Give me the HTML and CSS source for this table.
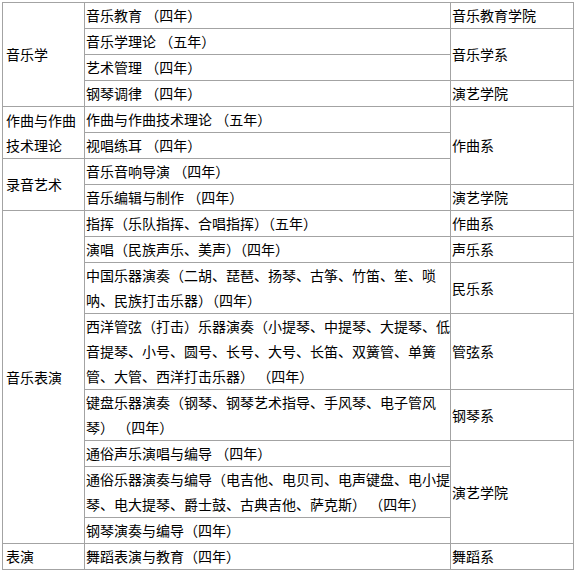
FILE: index.html
```html
<!DOCTYPE html>
<html lang="zh-CN">
<head>
<meta charset="utf-8">
<title>专业设置</title>
<link rel="stylesheet" href="styles.css">
</head>
<body>
<table class="majors">
  <colgroup>
    <col class="c-cat">
    <col class="c-major">
    <col class="c-dept">
  </colgroup>
  <tbody>
    <tr>
      <td class="cat" rowspan="4">音乐学</td>
      <td class="major">音乐教育 （四年）</td>
      <td class="dept">音乐教育学院</td>
    </tr>
    <tr>
      <td class="major">音乐学理论 （五年）</td>
      <td class="dept" rowspan="2">音乐学系</td>
    </tr>
    <tr>
      <td class="major">艺术管理 （四年）</td>
    </tr>
    <tr>
      <td class="major">钢琴调律 （四年）</td>
      <td class="dept">演艺学院</td>
    </tr>
    <tr>
      <td class="cat" rowspan="2">作曲与作曲技术理论</td>
      <td class="major">作曲与作曲技术理论 （五年）</td>
      <td class="dept" rowspan="3">作曲系</td>
    </tr>
    <tr>
      <td class="major">视唱练耳 （四年）</td>
    </tr>
    <tr>
      <td class="cat" rowspan="2">录音艺术</td>
      <td class="major">音乐音响导演 （四年）</td>
    </tr>
    <tr>
      <td class="major">音乐编辑与制作 （四年）</td>
      <td class="dept">演艺学院</td>
    </tr>
    <tr>
      <td class="cat" rowspan="8">音乐表演</td>
      <td class="major">指挥（乐队指挥、合唱指挥）（五年）</td>
      <td class="dept">作曲系</td>
    </tr>
    <tr>
      <td class="major">演唱（民族声乐、美声）（四年）</td>
      <td class="dept">声乐系</td>
    </tr>
    <tr>
      <td class="major">中国乐器演奏（二胡、琵琶、扬琴、古筝、竹笛、笙、唢呐、民族打击乐器）（四年）</td>
      <td class="dept">民乐系</td>
    </tr>
    <tr>
      <td class="major">西洋管弦（打击）乐器演奏（小提琴、中提琴、大提琴、低音提琴、小号、圆号、长号、大号、长笛、双簧管、单簧管、大管、西洋打击乐器） （四年）</td>
      <td class="dept">管弦系</td>
    </tr>
    <tr>
      <td class="major">键盘乐器演奏（钢琴、钢琴艺术指导、手风琴、电子管风琴） （四年）</td>
      <td class="dept">钢琴系</td>
    </tr>
    <tr>
      <td class="major">通俗声乐演唱与编导 （四年）</td>
      <td class="dept" rowspan="3">演艺学院</td>
    </tr>
    <tr>
      <td class="major">通俗乐器演奏与编导（电吉他、电贝司、电声键盘、电小提琴、电大提琴、爵士鼓、古典吉他、萨克斯） （四年）</td>
    </tr>
    <tr>
      <td class="major">钢琴演奏与编导（四年）</td>
    </tr>
    <tr>
      <td class="cat">表演</td>
      <td class="major">舞蹈表演与教育（四年）</td>
      <td class="dept">舞蹈系</td>
    </tr>
  </tbody>
</table>
</body>
</html>
```

FILE: styles.css
```css
html, body {
  margin: 0;
  padding: 0;
  background: #ffffff;
}

body {
  padding: 2px 0 0 2px;
  font-family: "Noto Sans CJK SC", "Noto Sans", sans-serif;
  font-size: 14px;
  color: #000000;
}

.majors {
  border-collapse: collapse;
  table-layout: fixed;
  width: 571px;
}

.c-cat { width: 82px; }
.c-major { width: 366px; }
.c-dept { width: 123px; }

.majors td {
  border: 1px solid #a3a3a3;
  padding: 0 0 0 1px;
  line-height: 25px;
  vertical-align: middle;
  text-align: left;
}

.majors td.cat {
  padding-left: 3px;
  padding-right: 4px;
}

.majors td.major {
  padding-left: 1px;
  padding-right: 0;
}

.majors td.dept {
  padding-left: 1px;
}
```
